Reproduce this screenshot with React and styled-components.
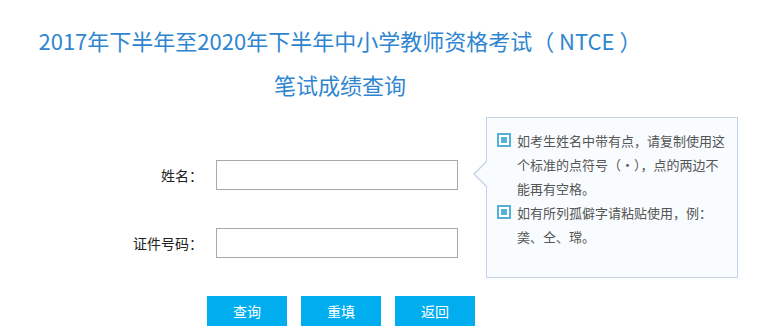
import styled, { createGlobalStyle } from "styled-components";

const GlobalStyle = createGlobalStyle`
    html, body {
        margin: 0;
        padding: 0;
        background: #ffffff;
    }
    body {
        font-family: "Noto Sans CJK SC", "Noto Sans", sans-serif;
    }
`;

const Page = styled.div`
    width: 680px;
    padding-top: 25px;
`;

const Title = styled.h1`
    margin: 0;
    font-size: 22px;
    font-weight: 400;
    line-height: 30px;
    color: #2f86d0;
    text-align: center;
`;

const SubTitle = styled(Title)`
    margin-top: 14px;
`;

const Form = styled.form`
    position: relative;
    margin-top: 61px;
    display: flex;
    flex-direction: column;
    gap: 38px;
`;

const Row = styled.div`
    display: flex;
    align-items: center;
    gap: 13px;
`;

const Label = styled.label`
    width: 203px;
    text-align: right;
    font-size: 14px;
    color: #222;
    line-height: 30px;
`;

const Input = styled.input`
    box-sizing: border-box;
    width: 242px;
    height: 30px;
    border: 1px solid #a9a9a9;
    padding: 0 6px;
    font-size: 14px;
    outline: none;
    background: #fff;
`;

const Buttons = styled.div`
    display: flex;
    justify-content: center;
    gap: 14px;
    padding-left: 2px;
`;

const Button = styled.button`
    width: 80px;
    height: 30px;
    border: none;
    background: #00aeef;
    color: #fff;
    font-family: inherit;
    font-size: 14px;
    cursor: pointer;
    padding: 0;
`;

const Tip = styled.div`
    position: absolute;
    left: 486px;
    top: -43px;
    box-sizing: border-box;
    width: 252px;
    height: 161px;
    padding: 11px 10px 0 10px;
    background: #f8fcff;
    border: 1px solid #c5d3e8;

    &::before,
    &::after {
        content: "";
        position: absolute;
        top: 42px;
        width: 0;
        height: 0;
        border-style: solid;
        border-color: transparent;
    }
    &::before {
        left: -14px;
        border-width: 14px 14px 14px 0;
        border-right-color: #c5d3e8;
    }
    &::after {
        left: -12px;
        top: 43px;
        border-width: 13px 13px 13px 0;
        border-right-color: #f8fcff;
    }
`;

const TipItem = styled.div`
    display: flex;
    align-items: flex-start;
    gap: 6px;
`;

const Check = styled.span`
    flex: none;
    box-sizing: border-box;
    width: 14px;
    height: 14px;
    margin-top: 4px;
    border: 2px solid #55b1da;
    padding: 2px;
    background: #fff;

    &::after {
        content: "";
        display: block;
        width: 100%;
        height: 100%;
        background: #55b1da;
    }
`;

const TipText = styled.p`
    margin: 0;
    width: 210px;
    font-size: 13px;
    line-height: 24px;
    color: #555;
`;

export default function App() {
    return (
        <>
            <GlobalStyle />
            <Page>
                <Title>2017年下半年至2020年下半年中小学教师资格考试（ NTCE ）</Title>
                <SubTitle as="h2">笔试成绩查询</SubTitle>
                <Form onSubmit={(e) => e.preventDefault()}>
                    <Row>
                        <Label htmlFor="name">姓名：</Label>
                        <Input id="name" type="text" />
                    </Row>
                    <Row>
                        <Label htmlFor="idno">证件号码：</Label>
                        <Input id="idno" type="text" />
                    </Row>
                    <Buttons>
                        <Button type="submit">查询</Button>
                        <Button type="reset">重填</Button>
                        <Button type="button">返回</Button>
                    </Buttons>
                    <Tip>
                        <TipItem>
                            <Check />
                            <TipText>如考生姓名中带有点，请复制使用这个标准的点符号（·），点的两边不能再有空格。</TipText>
                        </TipItem>
                        <TipItem>
                            <Check />
                            <TipText>
                                如有所列孤僻字请粘贴使用，例：
                                <br />
                                䶮、仝、瑺。
                            </TipText>
                        </TipItem>
                    </Tip>
                </Form>
            </Page>
        </>
    );
}
